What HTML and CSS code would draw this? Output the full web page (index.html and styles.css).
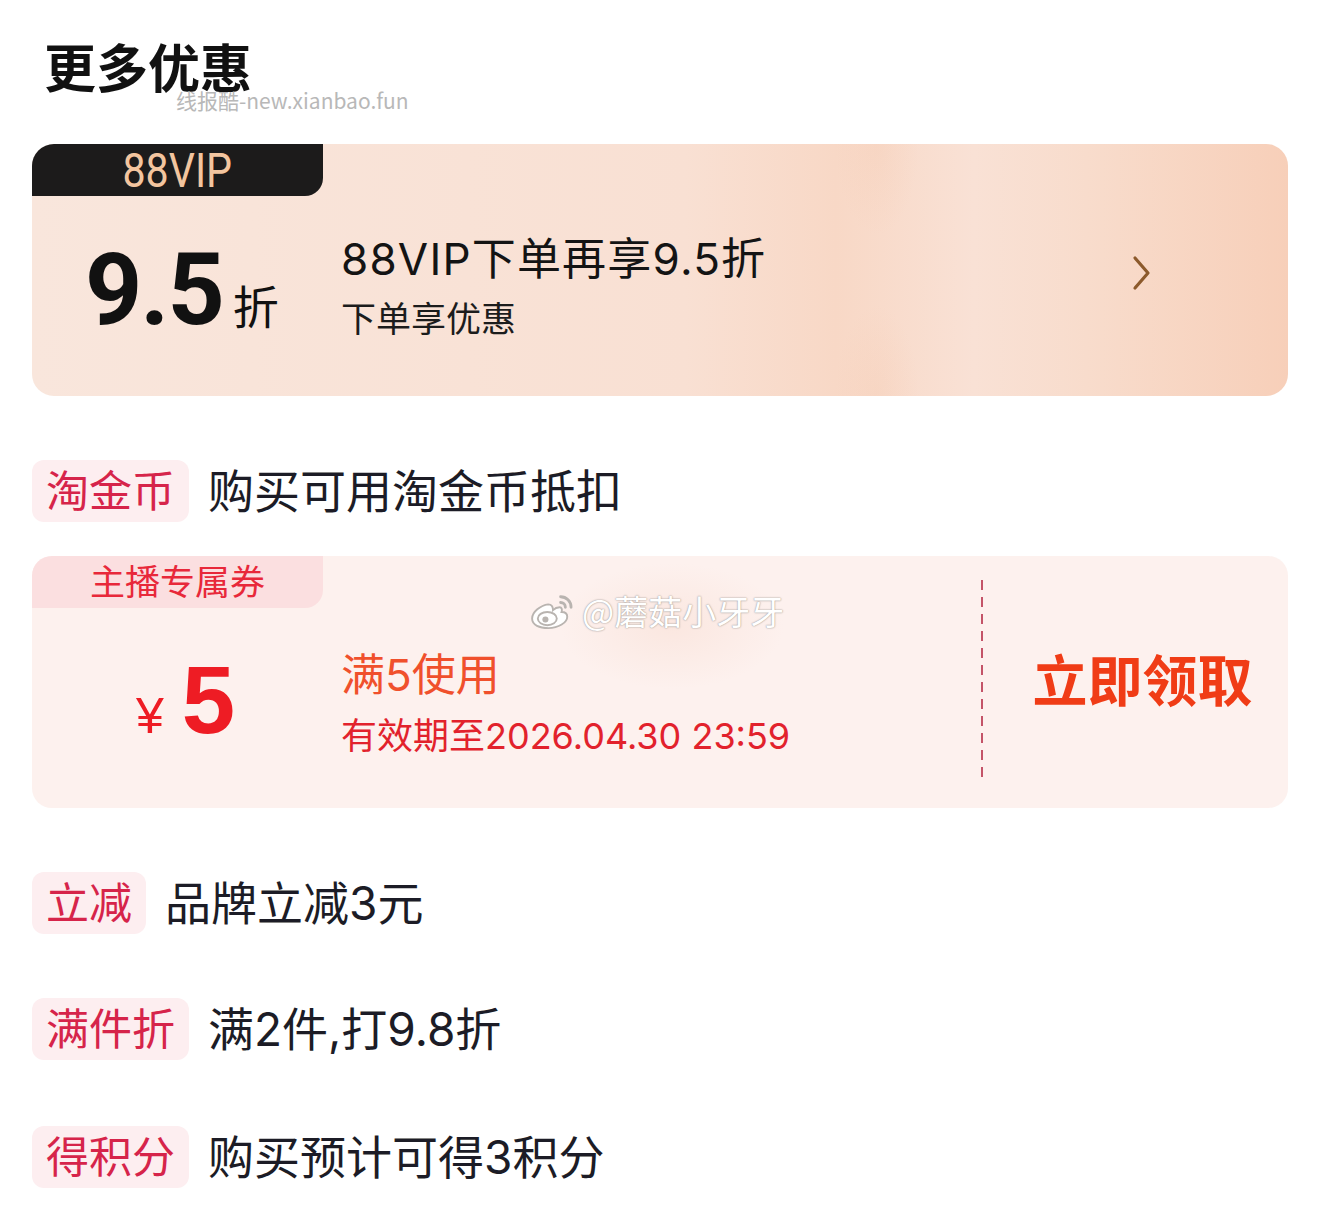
FILE: index.html
```html
<!DOCTYPE html>
<html>
<head>
  <meta charset="utf-8">
  <link rel="stylesheet" href="styles.css">
</head>

<body>
  <div class="page">
    <div class="header">
      <h2 class="title">更多优惠</h2>
      <span class="site-mark">线报酷-new.xianbao.fun</span>
    </div>

    <!-- 88VIP card -->
    <div class="vip-card">
      <div class="vip-badge"><span>88VIP</span></div>
      <div class="vip-body">
        <div class="vip-rate"><span class="rate-num">9.5</span><span class="rate-unit">折</span></div>
        <div class="vip-text">
          <div class="vip-title">88VIP下单再享9.5折</div>
          <div class="vip-sub">下单享优惠</div>
        </div>
        <svg class="chevron" width="20" height="36" viewBox="0 0 20 36">
          <path d="M3 3 L16 18 L3 33" fill="none" stroke="#8c5a2c" stroke-width="3.2" stroke-linecap="round" stroke-linejoin="round"/>
        </svg>
      </div>
    </div>

    <div class="promo-row gap-sm">
      <span class="tag">淘金币</span>
      <span class="promo-text">购买可用淘金币抵扣</span>
    </div>

    <!-- coupon card -->
    <div class="coupon-card">
      <div class="coupon-main">
        <div class="coupon-badge">主播专属券</div>
        <div class="coupon-body">
          <div class="coupon-value"><span class="yen">¥</span><span class="amount">5</span></div>
          <div class="coupon-text">
            <div class="coupon-rule">满5使用</div>
            <div class="coupon-date">有效期至2026.04.30 23:59</div>
          </div>
        </div>
      </div>
      <div class="coupon-split"></div>
      <div class="coupon-action">立即领取</div>

      <div class="weibo-mark">
        <svg width="46" height="38" viewBox="0 0 48 40">
          <path d="M19 13c-8 1-17 8-17 15 0 7 8 10 17 10 11 0 20-6 20-12 0-4-3-5-6-5 1-3 0-5-2-5-3 0-6 2-7 3 0-4-2-6-5-6z" fill="#fff" stroke="#b9b4b0" stroke-width="2"/>
          <ellipse cx="18" cy="28" rx="10" ry="7" fill="#fff" stroke="#b9b4b0" stroke-width="2"/>
          <circle cx="16" cy="29" r="3.2" fill="#b9b4b0"/>
          <path d="M32 5a11 11 0 0 1 11 11" fill="none" stroke="#b9b4b0" stroke-width="3" stroke-linecap="round"/>
          <path d="M32 11a5 5 0 0 1 5 5" fill="none" stroke="#b9b4b0" stroke-width="3" stroke-linecap="round"/>
        </svg>
        <span>@蘑菇小牙牙</span>
      </div>
    </div>

    <div class="promo-row">
      <span class="tag">立减</span>
      <span class="promo-text">品牌立减3元</span>
    </div>

    <div class="promo-row">
      <span class="tag">满件折</span>
      <span class="promo-text">满2件,打9.8折</span>
    </div>

    <div class="promo-row last">
      <span class="tag">得积分</span>
      <span class="promo-text">购买预计可得3积分</span>
    </div>
  </div>
</body>
</html>
```

FILE: styles.css
```css
body {
  margin: 0;
  background: #fff;
  font-family: Inter, "Noto Sans CJK SC", "Noto Sans", sans-serif;
  color: #1c1c26;
}

.page {
  padding: 0 32px 40px 32px;
}

/* header */
.header {
  position: relative;
  padding-top: 44px;
  margin-bottom: 48px;
}

.title {
  margin: 0 0 0 12px;
  font-size: 52px;
  line-height: 52px;
  font-weight: 700;
  color: #111;
}

.site-mark {
  position: absolute;
  left: 144px;
  top: 88px;
  font-family: "Noto Sans CJK SC", "Noto Sans", sans-serif;
  font-size: 21px;
  line-height: 24px;
  color: #b8b8b8;
}

/* 88VIP card */
.vip-card {
  height: 252px;
  border-radius: 22px;
  overflow: hidden;
  display: flex;
  flex-direction: column;
  background:
    radial-gradient(ellipse 60px 130px at 845px 0px, rgba(244, 196, 168, 0.22), rgba(244, 196, 168, 0) 70%),
    radial-gradient(ellipse 60px 130px at 845px 252px, rgba(244, 196, 168, 0.22), rgba(244, 196, 168, 0) 70%),
    linear-gradient(90deg, #f9e6dc 0%, #f9e0d3 52%, #f8d8c6 64%, #f9e1d5 75%, #f8dccc 84%, #f7cfb9 100%);
}

.vip-badge {
  width: 291px;
  height: 52px;
  background: #1c1b1b;
  border-radius: 0 0 18px 0;
  display: flex;
  justify-content: center;
  align-items: center;
}

.vip-badge span {
  display: inline-block;
  color: #f3c59f;
  font-family: Roboto, "Liberation Sans", sans-serif;
  font-size: 49px;
  line-height: 1;
  transform: scaleX(0.84);
}

.vip-body {
  flex: 1;
  display: flex;
  align-items: center;
  padding-bottom: 12px;
}

.vip-rate {
  width: 256px;
  padding-left: 53px;
  display: flex;
  align-items: baseline;
}

.rate-num {
  font-family: Roboto, "Liberation Sans", sans-serif;
  font-weight: 700;
  font-size: 100px;
  line-height: 100px;
  color: #111;
  letter-spacing: -2px;
}

.rate-unit {
  margin-left: 10px;
  font-size: 46px;
  color: #111;
}

.vip-text {
  flex: 1;
  margin-bottom: 8px;
}

.vip-title {
  font-size: 44px;
  line-height: 50px;
  letter-spacing: 1.2px;
  color: #141414;
}

.vip-sub {
  margin-top: 15px;
  font-size: 35px;
  line-height: 40px;
  color: #1c1c1c;
}

.chevron {
  margin-right: 136px;
  margin-bottom: 34px;
}

/* simple promo rows */
.promo-row {
  display: flex;
  align-items: center;
  height: 62px;
  margin-top: 64px;
}

.promo-row.gap-sm {
  margin-bottom: 34px;
}

.promo-row.last {
  margin-top: 66px;
}

.tag {
  height: 62px;
  line-height: 62px;
  padding: 0 14px;
  border-radius: 12px;
  background: #fdeef0;
  color: #d6244a;
  font-size: 43px;
}

.promo-text {
  margin-left: 19px;
  font-size: 46px;
  line-height: 62px;
  color: #1c1c26;
}

/* coupon card */
.coupon-card {
  position: relative;
  height: 252px;
  border-radius: 20px;
  overflow: hidden;
  display: flex;
  background:
    radial-gradient(ellipse 160px 90px at 640px 70px, rgba(249, 224, 214, 0.6), rgba(249, 224, 214, 0) 70%),
    #fdf1ee;
}

.coupon-main {
  width: 949px;
  display: flex;
  flex-direction: column;
}

.coupon-badge {
  width: 291px;
  height: 52px;
  background: #fbdfe0;
  border-radius: 0 0 18px 0;
  color: #e8283a;
  font-size: 35px;
  line-height: 52px;
  text-align: center;
}

.coupon-body {
  flex: 1;
  display: flex;
  align-items: center;
  padding-bottom: 16px;
}

.coupon-value {
  width: 205px;
  padding-left: 104px;
  display: flex;
  align-items: baseline;
  color: #ee1c24;
}

.yen {
  font-size: 50px;
  font-family: "Liberation Sans", sans-serif;
  margin-right: 18px;
}

.amount {
  font-family: "Liberation Sans", sans-serif;
  font-weight: 700;
  font-size: 96px;
  line-height: 100px;
}

.coupon-text {
  margin-top: 6px;
}

.coupon-rule {
  font-size: 44px;
  line-height: 50px;
  color: #f0502c;
}

.coupon-date {
  margin-top: 15px;
  font-size: 36px;
  line-height: 42px;
  color: #e2222c;
}

.coupon-split {
  width: 2px;
  margin: 24px 0 28px 0;
  background: repeating-linear-gradient(to bottom, #c45468 0 10px, transparent 10px 17px);
}

.coupon-action {
  flex: 1;
  display: flex;
  align-items: center;
  justify-content: center;
  padding-left: 14px;
  padding-bottom: 10px;
  font-size: 55px;
  font-weight: 700;
  color: #f03c16;
}

.weibo-mark {
  position: absolute;
  left: 498px;
  top: 30px;
  display: flex;
  align-items: center;
  gap: 6px;
  font-family: "Noto Sans CJK SC", sans-serif;
  font-size: 34px;
  color: #fff;
  text-shadow: 0 0 2px #a8a29e, 0 0 1px #a8a29e;
}
```
